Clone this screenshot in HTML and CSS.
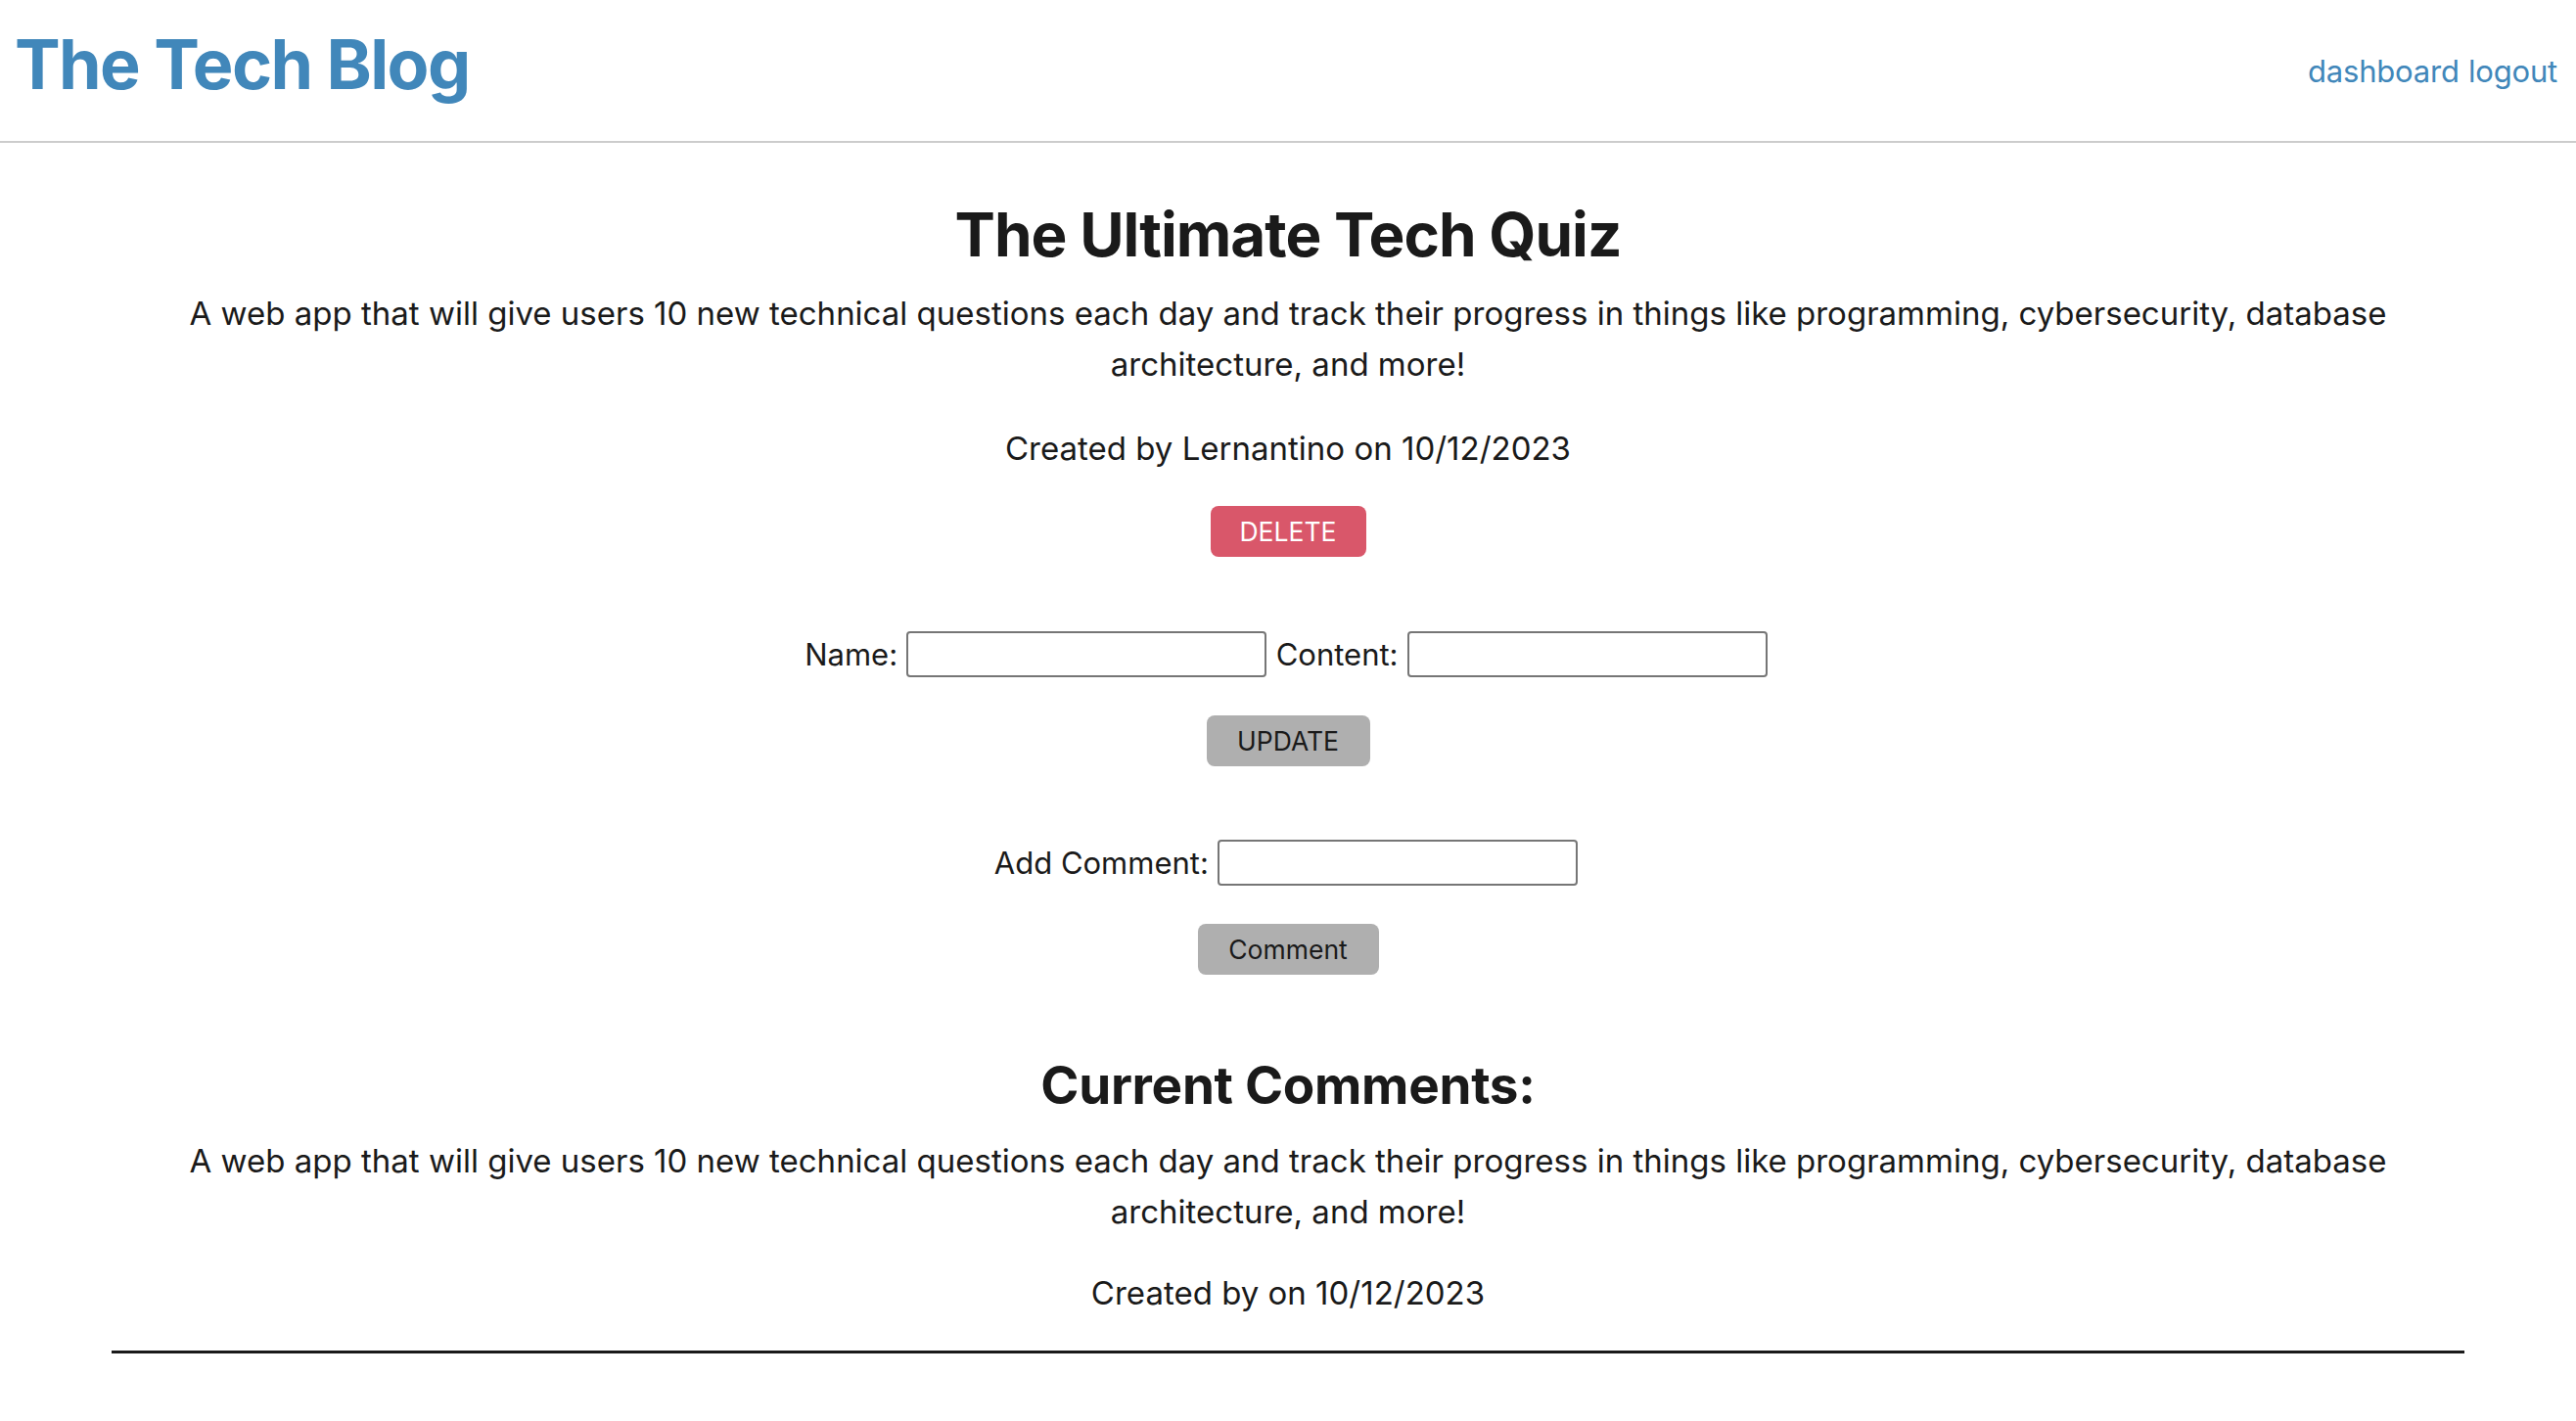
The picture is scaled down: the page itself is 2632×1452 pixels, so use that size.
FILE: index.html
```html
<!DOCTYPE html>
<html lang="en">
<head>
<meta charset="utf-8">
<title>The Tech Blog</title>
<link rel="stylesheet" href="styles.css">
</head>
<body>
<header class="site-header">
  <a class="brand" href="#">The Tech Blog</a>
  <nav class="nav"><a href="#">dashboard</a> <a href="#">logout</a></nav>
</header>
<main class="post">
  <section class="post-card">
    <h1 class="post-title">The Ultimate Tech Quiz</h1>
    <p class="post-body">A web app that will give users 10 new technical questions each day and track their progress in things like programming, cybersecurity, database architecture, and more!</p>
    <p class="post-meta">Created by Lernantino on 10/12/2023</p>
    <button class="btn btn-delete" type="button">DELETE</button>
  </section>
  <form class="edit-form">
    <div class="field-row">
      <label>Name:</label> <input class="text-input" type="text"> <label>Content:</label> <input class="text-input" type="text">
    </div>
    <button class="btn btn-gray btn-update" type="button">UPDATE</button>
  </form>
  <form class="comment-form">
    <div class="field-row">
      <label>Add Comment:</label> <input class="text-input" type="text">
    </div>
    <button class="btn btn-gray btn-comment" type="button">Comment</button>
  </form>
  <section class="comments">
    <h2 class="comments-title">Current Comments:</h2>
    <div class="comment">
      <p class="post-body">A web app that will give users 10 new technical questions each day and track their progress in things like programming, cybersecurity, database architecture, and more!</p>
      <p class="post-meta comment-meta">Created by on 10/12/2023</p>
    </div>
    <hr class="divider">
  </section>
</main>
</body>
</html>
```
FILE: styles.css
```css
html, body {
  margin: 0;
  padding: 0;
  background: #ffffff;
}
body {
  font-family: "Inter", "Noto Sans", sans-serif;
  color: #1a1a1a;
  font-size: 33px;
}
.site-header {
  display: flex;
  justify-content: space-between;
  align-items: center;
  height: 144px;
  padding: 0 19px 0 15px;
  border-bottom: 2px solid #cccccc;
}
.brand {
  color: #4187ba;
  text-decoration: none;
  font-weight: 700;
  font-size: 70px;
  letter-spacing: -1.6px;
  margin-top: -14px;
}
.nav a {
  color: #4187ba;
  text-decoration: none;
  font-size: 31px;
  letter-spacing: -0.2px;
}
.post {
  text-align: center;
}
.post-card {
  padding-top: 55px;
}
.post-title {
  font-size: 62px;
  font-weight: 700;
  letter-spacing: -1px;
  line-height: 77px;
  margin: 0 0 16px;
}
.post-body {
  margin: 0 160px;
  line-height: 52px;
}
.post-meta {
  margin: 34px 0 0;
  line-height: 52px;
}
.comment-meta {
  margin-top: 31px;
}
.btn {
  font-family: "Inter", "Noto Sans", sans-serif;
  font-size: 26.5px;
  height: 52px;
  border: none;
  border-radius: 8px;
  padding: 0;
  cursor: pointer;
}
.btn-delete {
  margin-top: 33px;
  width: 159px;
  background: #d9576a;
  color: #ffffff;
}
.btn-gray {
  background: #afafaf;
  color: #1a1a1a;
}
.btn-update {
  width: 167px;
  margin-top: 42px;
}
.btn-comment {
  width: 185px;
  margin-top: 42px;
}
.edit-form {
  margin-top: 73px;
}
.comment-form {
  margin-top: 72px;
}
.field-row {
  line-height: 47px;
  height: 47px;
  margin-left: -4px;
}
.text-input {
  box-sizing: border-box;
  width: 368px;
  height: 47px;
  border: 2px solid #767676;
  border-radius: 4px;
  vertical-align: middle;
  font-size: 26px;
  margin: 0;
}
.field-row label {
  font-size: 31px;
  vertical-align: middle;
}
.comments {
  margin-top: 82px;
}
.comments-title {
  font-size: 53px;
  font-weight: 700;
  letter-spacing: -0.3px;
  line-height: 62px;
  margin: 0 0 20px;
}
.divider {
  margin: 33px 114px 0;
  border: none;
  border-top: 3px solid #1a1a1a;
  height: 0;
}
```
